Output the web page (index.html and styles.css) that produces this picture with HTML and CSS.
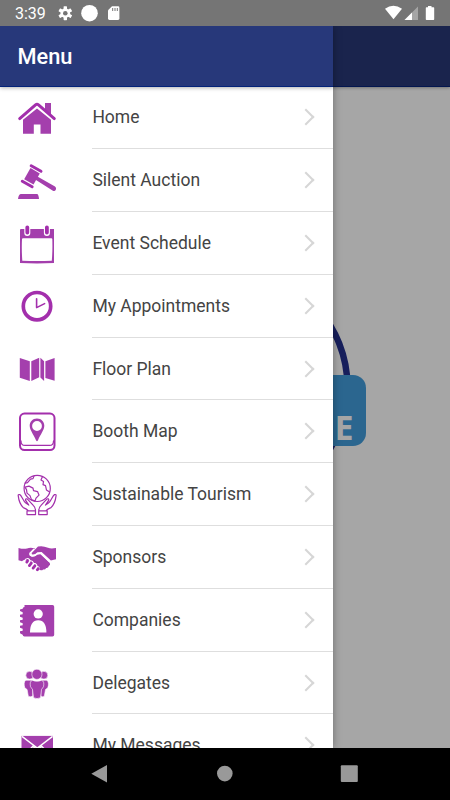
FILE: index.html
```html
<!DOCTYPE html>
<html lang="en">
<head>
<meta charset="utf-8">
<title>Menu</title>
<link rel="stylesheet" href="styles.css">
</head>
<body>
<div class="phone">
  <header class="status">
    <span class="time">3:39</span>
    <svg class="status-left" viewBox="56 0 66 26"><g fill="#fff"><g transform="translate(65.3 13.2)"><circle r="4.8"/><g><rect x="-1.7" y="-7" width="3.4" height="14" rx=".6"/><rect x="-1.7" y="-7" width="3.4" height="14" rx=".6" transform="rotate(60)"/><rect x="-1.7" y="-7" width="3.4" height="14" rx=".6" transform="rotate(120)"/></g><circle r="2.3" fill="#757575"/></g><circle cx="89.5" cy="13.2" r="8.3"/><path d="M112 6.3h6q1.4 0 1.4 1.4v10.8q0 1.4-1.4 1.4h-8.6q-1.4 0-1.4-1.4v-8.2z"/></g><path d="M112.7 8v3M115 8v3M117.3 8v3" stroke="#757575" stroke-width="1"/></svg>
    <svg class="status-right" viewBox="384 0 54 26"><path d="M385 8.800q8.300-6 17 0L393.500 19.300z" fill="#fff"/><path d="M418 6.600V20h-13.500z" fill="#a5a5a5"/><path d="M412 12.600V20h-7.500z" fill="#fff"/><path d="M428 6h3.500v1.300h2q.7 0 .7.700v11.300q0 .7-.7.700h-7q-.7 0-.7-.7V8q0-.7.7-.7h1.500z" fill="#fff"/></svg>
  </header>
  <main class="stage">
    <div class="page">
      <div class="page-bar"></div>
      <svg class="brand" viewBox="333 300 117 170"><circle cx="229" cy="387" r="118.500" fill="none" stroke="#171f5c" stroke-width="6.500"/><rect x="300" y="375" width="66" height="71" rx="13" fill="#2b668f"/><text x="334.600" y="439.500" class="brand-letter">E</text></svg>
    </div>
    <nav class="drawer">
      <h1 class="title">Menu</h1>
      <ul class="list">
        <li class="item"><svg class="icon" viewBox="15 95.100 44 44"><path d="M45 103h6v12l-6-5z"/><path d="M23 119.800l14-11.300 14 11.300v14H40.500v-9.300h-6.700v9.300H23z"/><path class="cut" d="M18.500 120.800L37 106.200l18.500 14.600"/><path class="line roof" d="M19.700 118.700L35.500 105q1.500-1.200 3 0l15.800 13.700"/></svg><span class="label">Home</span></li>
        <li class="item"><svg class="icon" viewBox="15 157.900 44 44"><path d="M30.500 168l9.300 5.300-6.300 11.200-9.300-5.300z"/><path class="line thick" d="M31.200 165.600l9.800 5.500M22.300 181.200l9.800 5.400"/><path d="M36.500 176l18.500 10.500q1.700 1.300.9 3-1 2.200-3 1.200L35.200 179.500z"/><path d="M21 194h16q1.500 0 2 4.900H18q.7-4.900 3-4.900z"/></svg><span class="label">Silent Auction</span></li>
        <li class="item"><svg class="icon" viewBox="15 220.700 44 44"><path fill-rule="evenodd" d="M21 228.800h33v34q-17 .6-34 0v-33q0-1 1-1zM23 238q-.9 0-1 1-.5 10 .3 21.500 14.700.6 29.500 0 .9-11 .5-21.500 0-1-1-1z"/><path class="cut hook" d="M27.300 227v5.600M46.900 227v5.600"/><path class="line hook-in" d="M27.300 227v5.300M46.900 227v5.300"/></svg><span class="label">Event Schedule</span></li>
        <li class="item"><svg class="icon" viewBox="15 283.500 44 44"><circle class="line clock" cx="37" cy="306.700" r="13.700"/><path class="line hands" d="M36.600 299.200v8.900l8-4"/></svg><span class="label">My Appointments</span></li>
        <li class="item"><svg class="icon" viewBox="15 346.300 44 44"><path d="M19.800 358.300l10 3.300v19.700l-10-3.300zM31.300 361.600l7.900-3.600v19.600l-7.900 3.700zM40.400 358l3.700 3.600v19.700l-3.700-3.400zM45.400 361.600l9.200-3.200v22.600l-9.200-2.800z"/></svg><span class="label">Floor Plan</span></li>
        <li class="item"><svg class="icon" viewBox="15 409.100 44 44"><rect class="line frame" x="20" y="413.700" width="34.500" height="36.500" rx="4.500"/><path class="line thin" d="M21 441q0 4.500 4 4.500h24.500q4 0 4-4.500"/><path fill-rule="evenodd" d="M37 418.500c-4.500 0-7.300 3.400-7.300 7.300 0 4.200 3.800 8.500 6.300 14.500q1 2 2 0c2.500-6 6.300-10.300 6.300-14.500 0-3.900-2.800-7.300-7.300-7.300zm0 2.700a4.900 4.900 0 1 1 0 9.800 4.900 4.900 0 0 1 0-9.800z"/></svg><span class="label">Booth Map</span></li>
        <li class="item"><svg class="icon" viewBox="15 471.900 44 44"><g class="line fine"><circle cx="37.200" cy="488.300" r="13.100"/><path d="M34 476l-1 2.500-2.500.5-3 3.500-2.500.500M42.500 476.500l-1.500 3.500 2.500 1.500-.5 3 2.500 1 1 4.500 3 2M25 487l4-1 4 2 .5 2.500 4 1 1.500 3.500-3 3-1 3-3.500-1.500-1.500-4-3-2.500-.5-3.500z"/><path d="M18.300 496q-.5-2 1.500-1.500c2 1 3.300 6.700 6 8.500l3 2-3.300-5q0-2 2-1l6 6.500q2 2 2 5M18.300 496c.5 5 2.500 9 5 11.500q4 1.500 4.800 3M56 496q.5-2-1.500-1.500c-2 1-3.300 6.700-6 8.500l-3 2 3.300-5q0-2-2-1l-6 6.500q-2 2-2 5M56 496c-.5 5-2.500 9-5 11.500q-4 1.500-4.800 3M27 510.700h8.500v3.800H27zM38.700 510.700h8.500v3.800h-8.500z"/></g></svg><span class="label">Sustainable Tourism</span></li>
        <li class="item"><svg class="icon" viewBox="15 534.700 44 44"><path d="M18.500 548.700q5.500 1.500 8.500.4 3.500-1.500 8 0l-5 5q-.7 2 1.300 3 3 1 6-2l3-.5 9.500 9.200q1 2-1 2.900-.5 2.300-2.700 2-.8 2-3 1.400-1.500 1.700-3.300.3l-2.600-2.400q-.5-3-3.200-3-1-2.900-3.700-2.600-1.500-2.600-4-1-2-1.800-4.300.5l-3.500-.9z"/><path d="M56 548.700q-5 1-8-.2-5.500-2.500-10-1.200l-6.300 6.300q-.4 1.500 1.200 1.700 2.500 0 4.500-2.300l4.200-.3 9.300 8.500 5.100-1.200z"/><path class="seam" d="M34 549.700l-4.200 4.300q-.5 2.800 2.800 2.700 2.500-.2 4.400-2l4-.5 8.800 8.300M24.500 561.500q1-2.500 3.500-2.300 1.500.5 2 2.500 2.500-.5 3.500 2.300 3-.2 3.500 3 2.200.3 2.500 2.500"/><path class="line fingers" d="M27.600 561.700l-.8 1.100M31.300 563.800l-1.900 2.500M34.900 566.500l-1.800 2.300M38.300 569.500l-1 1"/></svg><span class="label">Sponsors</span></li>
        <li class="item"><svg class="icon" viewBox="15 597.500 44 44"><path d="M24.500 605.500h28q1.700 0 1.700 1.700v28q0 1.700-1.700 1.700h-28q-1.800 0-1.800-1.700l-2.700-1.500v-2l2.700-.5v-2l-2.700-1v-2l2.700-.5v-2l-2.700-1v-2l2.700-.5v-2l-2.700-1v-2l2.700-.5v-2l-2.700-1.200v-1.500l2.700-.8q0-1.700 1.800-1.700z"/><g fill="#fff"><circle cx="38.200" cy="614.400" r="4.600"/><path d="M30 633c0-8 2.700-12.300 8.200-12.300s8.200 4.300 8.200 12.300z"/></g></svg><span class="label">Companies</span></li>
        <li class="item"><svg class="icon" viewBox="15 660.300 44 44"><g class="crowd"><circle cx="29.700" cy="675.500" r="3.900"/><circle cx="43.900" cy="675.500" r="3.900"/><path d="M25.800 680.500h7v15.800q-2.300 1.500-4.500.2l-1.200-6.700-2.300-1.700q-1.700-5.500 1-7.600zM40.800 680.500h6q2.700 2.100 1 7.600l-2.300 1.700-1.200 6.700q-2.200 1.300-3.500-.2z"/><path d="M32.500 680.700q4.500 1.700 9 0 3.200.5 2 6.300l-2 2.800-1 8.200q-3.500 1.800-7 0l-1-8.200-2-2.800q-1.200-5.800 2-6.300z"/><circle cx="36.900" cy="674.600" r="5.100"/></g></svg><span class="label">Delegates</span></li>
        <li class="item"><svg class="icon" viewBox="15 723.100 44 44"><path d="M21.500 736H53v24H21.500z"/><path class="flap" d="M22 736.500l15.300 11.700L52.600 736.500M22 758l10.700-11.500 4.600 3.500 4.600-3.500L52.600 758"/></svg><span class="label">My Messages</span></li>
      </ul>
    </nav>
  </main>
  <footer class="navbar">
    <svg class="nav-icons" viewBox="0 0 450 52"><g fill="#999"><path d="M91.300 25.700L107 17v17.400z"/><circle cx="224.800" cy="25.600" r="7.800"/><rect x="340.800" y="17.300" width="17" height="16.800" rx="1"/></g></svg>
  </footer>
</div>
</body>
</html>
```
FILE: styles.css
```css
* { box-sizing: border-box; }
body { margin: 0; font-family: Roboto, sans-serif; }
.phone { width: 450px; height: 800px; display: flex; flex-direction: column; overflow: hidden; }
.status { height: 26px; flex: none; background: #757575; color: #fff; display: flex; align-items: center; padding: 0 12px 0 15px; }
.time { width: 41px; font-size: 16px; line-height: 26px; padding-top: 2px; }
.status-left { width: 66px; height: 26px; }
.status-right { width: 54px; height: 26px; margin-left: auto; }
.stage { height: 722px; flex: none; position: relative; overflow: hidden; background: #a6a6a6; }
.page { height: 100%; }
.page-bar { height: 61px; background: #1a244d; border-bottom: 1px solid #03164f; box-shadow: 0 1px 3px rgba(0,0,0,.3); }
.brand { display: block; width: 117px; height: 170px; margin: 213px 0 0 333px; }
.brand-letter { font: bold 34px "Open Sans", sans-serif; fill: #a6a6a6; }
.drawer { position: absolute; top: 0; left: 0; width: 332.5px; height: 722px; overflow: hidden; background: #fff; box-shadow: 0 0 8px rgba(0,0,0,.35); }
.title { position: relative; margin: 0; height: 61px; padding-left: 17.500px; font-size: 21.800px; font-weight: 500; line-height: 62px; color: #fff; background: #27387a; border-bottom: 1px solid #03237a; box-shadow: 0 1px 4px rgba(0,0,0,.3); }
.list { list-style: none; margin: -.6px 0 0; padding: 0; }
.item { height: 62.800px; display: flex; align-items: center; padding-left: 15px; }
.icon { width: 44px; height: 44px; margin: -1.800px 33.400px 0 0; flex: none; fill: #a43fad; }
.label { flex: 1; height: 100%; display: flex; align-items: center; justify-content: space-between; border-bottom: 1px solid #dedede; font-size: 17.500px; color: #444; padding: .1px 21px 0 0; }
.label::after { content: ""; width: 10px; height: 10px; border: solid #d6d6d6; border-width: 2px 2px 0 0; transform: rotate(45deg); }
.line { fill: none; stroke: #a32fac; stroke-linecap: round; stroke-linejoin: round; }
.roof { stroke-width: 3; }
.cut { fill: none; stroke: #fff; stroke-width: 2.500; }
.thick { stroke-width: 3; }
.hook { stroke-width: 6; stroke-linecap: round; }
.hook-in { stroke-width: 3.800; }
.clock { stroke-width: 3.700; }
.hands { stroke-width: 1.600; }
.frame { stroke-width: 2; }
.thin { stroke-width: 1.200; }
.fine { stroke-width: 1.200; }
.fingers { stroke-width: 2.800; }
.seam { fill: none; stroke: #fff; stroke-width: 1.200; }
.crowd > * { stroke: #fff; stroke-width: .6; }
.flap { fill: none; stroke: #fff; stroke-width: 1.400; }
.navbar { flex: 1; background: #000; }
.nav-icons { display: block; width: 450px; height: 52px; }
```
